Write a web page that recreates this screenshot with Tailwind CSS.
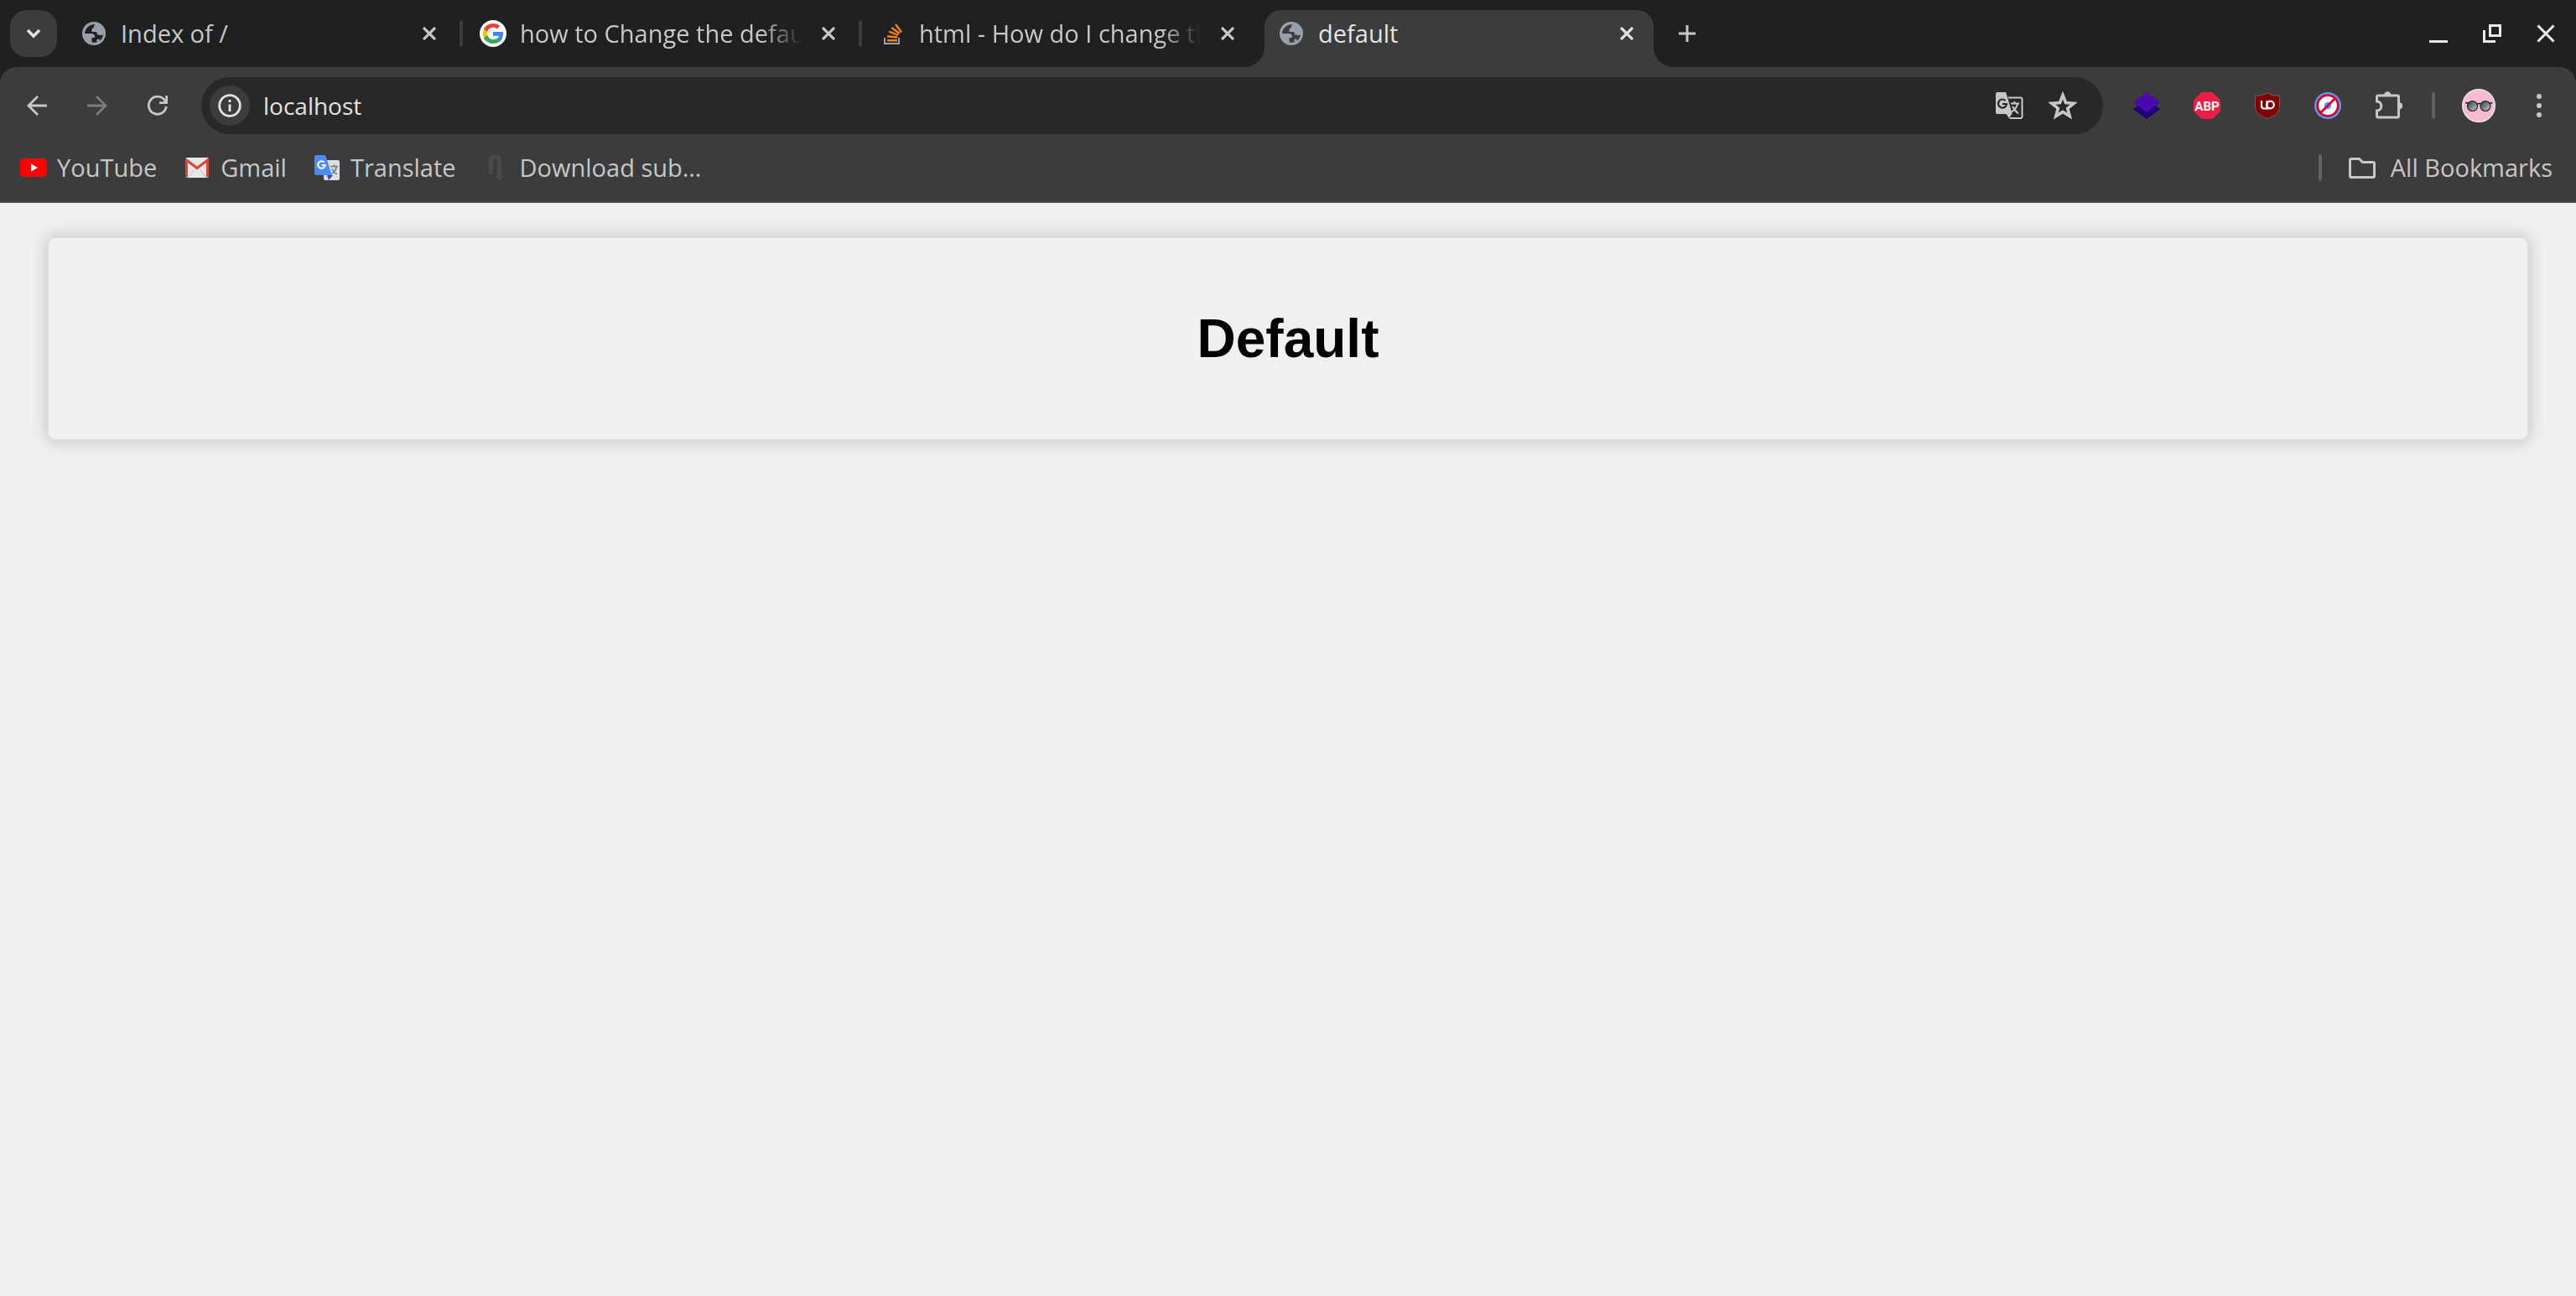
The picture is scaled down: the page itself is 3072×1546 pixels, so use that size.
<!DOCTYPE html>
<html lang="en">
<head>
<meta charset="utf-8">
<title>default</title>
<script src="https://cdn.jsdelivr.net/npm/@tailwindcss/browser@4"></script>
</head>
<body class="flex min-h-screen flex-col bg-[#f0f0f0] font-['Open_Sans',sans-serif] text-[29px] leading-[38px] text-[#c7c7c7]">
<svg class="hidden" aria-hidden="true">
  <symbol id="globe" viewBox="0 0 28 28">
    <circle cx="14" cy="14" r="14" fill="#9aa0a9"/>
    <path fill="var(--land)" d="M16 3C12 3 9 4 7 6 4.500 8 3 11 3 14h8c2.500 0 4 1 4 4v1h-3.500v5.300c2 .8 5 .7 7-.3-.8-.2-1.300-.8-1.300-1.500 0-1.200.8-2 2-2h1c.8-1.500.6-3-1-3.700-1-.4-1.300-1-1.300-2C17.900 12.500 17 12 15 12h-3.500V9.500C11.500 8 12.500 7 14 7V5.500C14 4.300 15 3.300 16 3z"/>
    <path fill="var(--land)" d="M19 14.500c.6 1.400 2 2 3.600 1.600l2.400-.6c-.4 3-2 5.500-4.200 7.200l-.8-3.200c-.3-1-1.500-1.500-2.500-1.500z"/>
  </symbol>
  <symbol id="cross" viewBox="0 0 16 16"><path d="M1 1l14 14M15 1L1 15" stroke="currentColor" stroke-width="3.200" fill="none"/></symbol>
</svg>

<header>
  <div class="flex h-20 items-center bg-[#1f2020]">
    <button aria-label="Search tabs" class="mr-2 ml-3 flex size-14 shrink-0 items-center justify-center rounded-[20px] bg-[#3c3c3c]">
      <svg class="h-3 w-4" viewBox="0 0 16 12"><path d="M1 2l7 7 7-7" stroke="#e3e3e3" stroke-width="3.400" fill="none"/></svg>
    </button>

    <div class="flex w-[476px] items-center pl-5">
      <button class="flex min-w-0 flex-1 items-center gap-4 text-left">
        <svg class="size-8 shrink-0 p-0.5 [--land:#1f2020]"><use href="#globe"/></svg>
        <span class="flex-1 overflow-hidden whitespace-nowrap">Index of /</span>
      </button>
      <button aria-label="Close tab" class="mx-4 flex size-8 items-center justify-center"><svg class="size-4"><use href="#cross"/></svg></button>
      <span class="ml-1 h-8 w-1 rounded-full bg-[#3c3c3c]"></span>
    </div>

    <div class="flex w-[476px] items-center pl-5">
      <button class="flex min-w-0 flex-1 items-center gap-4 text-left">
        <svg class="size-8 shrink-0" viewBox="0 0 32 32"><circle cx="16" cy="16" r="16" fill="#fff"/>
          <g transform="translate(4 4)">
          <path fill="#4285f4" d="M24 12.300c0-.9-.1-1.600-.2-2.300H12v4.700h6.800c-.3 1.600-1.200 2.900-2.500 3.800v3.100h4C22.600 19.400 24 16.200 24 12.300z"/>
          <path fill="#34a853" d="M12 24c3.300 0 6.100-1.100 8.200-3l-4-3c-1.100.7-2.500 1.200-4.200 1.200-3.200 0-5.900-2.100-6.900-5.100H1v3.200C3 21.300 7.200 24 12 24z"/>
          <path fill="#fbbc05" d="M5.100 14.200c-.5-1.500-.5-3.100 0-4.600V6.500H1c-1.500 3.200-1.500 7.400 0 10.900z"/>
          <path fill="#ea4335" d="M12 4.700c1.800 0 3.400.6 4.700 1.800l3.500-3.400C18.100 1.100 15.300 0 12 0 7.200 0 3 2.600 1 6.500l4.100 3.200C6.100 6.800 8.800 4.700 12 4.700z"/></g>
        </svg>
        <span class="flex-1 overflow-hidden whitespace-nowrap [mask-image:linear-gradient(to_right,black_calc(100%-48px),transparent)]">how to Change the default</span>
      </button>
      <button aria-label="Close tab" class="mx-4 flex size-8 items-center justify-center"><svg class="size-4"><use href="#cross"/></svg></button>
      <span class="ml-1 h-8 w-1 rounded-full bg-[#3c3c3c]"></span>
    </div>

    <div class="flex w-[476px] items-center pl-5">
      <button class="flex min-w-0 flex-1 items-center gap-4 text-left">
        <svg class="size-8 shrink-0" viewBox="0 0 32 32" fill="none">
          <path d="M7 21v7h17v-7" stroke="#9aa0a6" stroke-width="2"/>
          <path d="M10 24.200h12M10.200 19.200l12 1.300M12.200 13.700l11 4.300M15.200 9l9.500 7M20 5l7 9.500" stroke="#f48024" stroke-width="2.400"/>
        </svg>
        <span class="flex-1 overflow-hidden whitespace-nowrap [mask-image:linear-gradient(to_right,black_calc(100%-48px),transparent)]">html - How do I change the</span>
      </button>
      <button aria-label="Close tab" class="mx-4 flex size-8 items-center justify-center"><svg class="size-4"><use href="#cross"/></svg></button>
      <span class="ml-1 h-8 w-1"></span>
    </div>

    <div class="relative mr-2 ml-1 flex h-[68px] w-[464px] items-center self-end rounded-t-[20px] bg-[#3c3c3c] pb-3 pl-4 text-[#e3e3e3]">
      <svg class="absolute bottom-0 -left-6 size-6" viewBox="0 0 24 24"><path d="M0 24H24V0A24 24 0 0 1 0 24z" fill="#3c3c3c"/></svg>
      <svg class="absolute -right-6 bottom-0 size-6" viewBox="0 0 24 24"><path d="M24 24H0V0A24 24 0 0 0 24 24z" fill="#3c3c3c"/></svg>
      <button class="flex min-w-0 flex-1 items-center gap-4 text-left">
        <svg class="size-8 shrink-0 p-0.5 [--land:#3c3c3c]"><use href="#globe"/></svg>
        <span class="flex-1 overflow-hidden whitespace-nowrap">default</span>
      </button>
      <button aria-label="Close tab" class="mx-4 flex size-8 items-center justify-center"><svg class="size-4"><use href="#cross"/></svg></button>
    </div>

    <button aria-label="New tab" class="flex size-16 items-center justify-center">
      <svg class="size-5" viewBox="0 0 20 20"><path d="M10 0v20M0 10h20" stroke="#c7c7c7" stroke-width="3"/></svg>
    </button>

    <div class="ml-auto flex pr-1 text-[#e9e9ed]">
      <button aria-label="Minimize" class="flex size-16 items-center justify-center"><svg class="size-[22px]" viewBox="0 0 22 22"><path d="M0 20.500h22" stroke="currentColor" stroke-width="3"/></svg></button>
      <button aria-label="Restore" class="flex size-16 items-center justify-center"><svg class="size-[22px]" viewBox="0 0 22 22"><path d="M8.500 1.500h12v12h-12zM1.500 7v13.500H15" fill="none" stroke="currentColor" stroke-width="3"/></svg></button>
      <button aria-label="Close" class="flex size-16 items-center justify-center"><svg class="size-[22px]" viewBox="0 0 22 22"><path d="M1.500 1.500l19 19M20.500 1.500l-19 19" fill="none" stroke="currentColor" stroke-width="3"/></svg></button>
    </div>
  </div>

  <div class="bg-[#1f2020]">
    <div class="rounded-t-[20px] border-b-2 border-[#484848] bg-[#3c3c3c]">
      <div class="flex items-center pt-3 pr-4 pl-4">
        <nav class="flex gap-4 pr-6">
          <button aria-label="Back" class="flex size-14 items-center justify-center"><svg class="size-6" viewBox="0 0 24 24" fill="none" stroke="#c7c7c7" stroke-width="2.800"><path d="M24 12H2M13 1L2 12l11 11"/></svg></button>
          <button aria-label="Forward" class="flex size-14 items-center justify-center"><svg class="size-6" viewBox="0 0 24 24" fill="none" stroke="#7b7b7b" stroke-width="2.800"><path d="M0 12h22M11 1l11 11-11 11"/></svg></button>
          <button aria-label="Reload" class="flex size-14 items-center justify-center"><svg class="size-6" viewBox="0 0 24 24" fill="none" stroke="#c7c7c7" stroke-width="2.800"><path d="M22.300 13A10.500 10.500 0 1 1 20 5l2 3.500M22.600 0v8.600H14"/></svg></button>
        </nav>
        <div class="flex h-[68px] flex-1 items-center rounded-full bg-[#282828] pr-[30px] pl-[10px]">
          <button aria-label="View site information" class="flex size-12 items-center justify-center rounded-full bg-[#3c3c3c]">
            <svg class="size-7" viewBox="0 0 28 28" fill="none" stroke="#e3e3e3" stroke-width="2.800"><circle cx="14" cy="14" r="12.300"/><path d="M14 12.500V21M14 7v3"/></svg>
          </button>
          <input aria-label="Address" value="localhost" class="ml-4 h-12 min-w-0 flex-1 bg-transparent text-[28px] text-[#e3e3e3] outline-none">
          <button aria-label="Translate this page" class="mr-7 flex size-9 items-center justify-center">
            <svg class="size-[34px]" viewBox="0 0 34 34">
              <path d="M16 7.500h14.500a2 2 0 0 1 2 2v20.500a2 2 0 0 1-2 2H17.500" fill="none" stroke="#c7c7c7" stroke-width="2"/>
              <path d="M3 1h10l2 6 5.500 19.500L17 32l-3.500-5H3a2 2 0 0 1-2-2V3a2 2 0 0 1 2-2z" fill="#c7c7c7"/>
              <path d="M12.600 11A5 5 0 1 0 14 15H9" fill="none" stroke="#282828" stroke-width="2.200"/>
              <path d="M19 14.500H29M23.300 12v2.500M27 15c-1 4.500-4 7.500-7 9.500M21 18c1.500 3.500 4 6 7 8.500" fill="none" stroke="#c7c7c7" stroke-width="2"/>
            </svg>
          </button>
          <button aria-label="Bookmark this tab" class="flex size-9 items-center justify-center">
            <svg class="size-[34px]" viewBox="0 0 34 34"><path d="M17 4.500l3.500 9 9.700.7-7.500 6.100 2.500 9.300L17 24.400l-8.200 5.200 2.500-9.300-7.500-6.100 9.700-.7z" fill="none" stroke="#c7c7c7" stroke-width="3.600"/></svg>
          </button>
        </div>
        <div class="flex items-center gap-4 pl-6">
          <button aria-label="Layers extension" class="flex size-14 items-center justify-center"><svg class="size-8" viewBox="0 0 32 32"><path d="M16 8l16 12-16 12L0 20z" fill="#22007a"/><path d="M16 0l16 12-16 12L0 12z" fill="#4a08ae"/></svg></button>
          <button aria-label="Adblock Plus" class="flex size-14 items-center justify-center"><svg class="size-8" viewBox="0 0 32 32"><path d="M9.500 0h13L32 9.500v13L22.500 32h-13L0 22.500v-13z" fill="#ed1e45"/><text x="16" y="21.500" text-anchor="middle" font-family="Roboto" font-weight="700" font-size="15" fill="#fff">ABP</text></svg></button>
          <button aria-label="uBlock Origin" class="flex size-14 items-center justify-center"><svg class="size-8" viewBox="0 0 32 32"><path d="M16 .7c4 2.600 8 3.300 14.500 3.500v14C30.500 24 24 29 16 31.500 8 29 1.500 24 1.500 18.200v-14C8 4 12 3.300 16 .7z" fill="#800000" stroke="#8a6a6a" stroke-width=".8"/><path d="M9 10v6.500a3 3 0 0 0 3 3h3.500V10M15.500 19.500h2" fill="none" stroke="#fff" stroke-width="2.200"/><circle cx="19.500" cy="15" r="4.300" fill="none" stroke="#fff" stroke-width="2.200"/></svg></button>
          <button aria-label="Popup blocker" class="flex size-14 items-center justify-center"><svg class="size-8" viewBox="0 0 32 32"><circle cx="16" cy="16" r="16" fill="#599cf5"/><circle cx="16" cy="16" r="12.300" fill="#fff" stroke="#d8002f" stroke-width="2.800"/><circle cx="16" cy="16" r="4.300" fill="#599cf5"/><path d="M7 25L25 7" stroke="#d8002f" stroke-width="2.800"/></svg></button>
          <button aria-label="Extensions" class="flex size-14 items-center justify-center"><svg class="size-9" viewBox="0 0 36 36"><path d="M6 6h23a1.500 1.500 0 0 1 1.500 1.500v23A1.500 1.500 0 0 1 29 32H6a1.500 1.500 0 0 1-1.500-1.500V24c7 0 7-11 0-11V7.500A1.500 1.500 0 0 1 6 6z" fill="none" stroke="#c7c7c7" stroke-width="3"/><path d="M13 5.500a4.200 4.200 0 0 1 8.400 0zM31 14a4.200 4.200 0 0 1 0 8.400z" fill="#c7c7c7"/></svg></button>
        </div>
        <span class="mr-8 ml-6 h-8 w-1 rounded-full bg-[#606060]"></span>
        <button aria-label="Profile" class="size-10">
          <svg class="size-10" viewBox="0 0 40 40">
            <defs><linearGradient id="lens" x1="0" x2="1" y1="0" y2="1"><stop offset="0" stop-color="#2e3a3d"/><stop offset=".5" stop-color="#6f8588"/><stop offset="1" stop-color="#f2c8cc"/></linearGradient></defs>
            <circle cx="20" cy="20" r="19.300" fill="#f8bbd0" stroke="#e9e9e9" stroke-width="1.400"/>
            <g fill="url(#lens)" stroke="#222" stroke-width="1.200"><circle cx="12.500" cy="20.500" r="6"/><circle cx="28" cy="20.500" r="6"/></g>
            <path d="M18 18.500c1.500-1.300 3-1.300 4.500 0M4 16.500l4 .8M36.500 16.500l-4 .8" fill="none" stroke="#222" stroke-width="1.600"/>
          </svg>
        </button>
        <button aria-label="Menu" class="ml-6 flex size-14 items-center justify-center"><svg class="h-7 w-2" viewBox="0 0 8 28" fill="#c7c7c7"><circle cx="4" cy="3" r="3"/><circle cx="4" cy="14" r="3"/><circle cx="4" cy="25" r="3"/></svg></button>
      </div>

      <nav class="flex h-20 items-center pr-7 pl-6 whitespace-nowrap">
        <a href="#" class="flex items-center gap-3">
          <svg class="size-8" viewBox="0 0 32 32"><rect y="5" width="32" height="22" rx="5" fill="#f00"/><path d="M13 11.200v9.600l8-4.800z" fill="#fff"/></svg>YouTube</a>
        <a href="#" class="ml-8 flex items-center gap-3">
          <svg class="size-8" viewBox="0 0 32 32"><path d="M3 4h26v24H3z" fill="#e8e8e8"/><path d="M6 27l7-9M26 27l-7-9" stroke="#d0d0d0" stroke-width="1.500"/><path d="M3.500 27.500V7L16 16.500 28.500 7v20.500" fill="none" stroke="#db4437" stroke-width="3"/></svg>Gmail</a>
        <a href="#" class="ml-8 flex items-center gap-3">
          <svg class="size-8" viewBox="0 0 32 32"><rect x="12" y="7" width="19" height="24" rx="2" fill="#dedede"/><path d="M16 25h7l-5 6z" fill="#3b48b8"/><path d="M3 1h11l8 24H3a2 2 0 0 1-2-2V3a2 2 0 0 1 2-2z" fill="#4c8bf5"/><path d="M12.600 9.500A4.300 4.300 0 1 0 13.800 13H9.600" fill="none" stroke="#fff" stroke-width="2"/><path d="M20 14.500h9M24.500 12.500v2M27.500 15c-1 4-3 6-5.500 8M22 17.500c1.500 3 3.500 5 6 6.500" fill="none" stroke="#607d8b" stroke-width="1.500"/></svg>Translate</a>
        <a href="#" class="ml-8 flex items-center gap-3">
          <svg class="size-8" viewBox="0 0 32 32"><path d="M9.500 23V6.500a3.500 3.500 0 0 1 3.500-3.500h3a3.500 3.500 0 0 1 3.500 3.500V27" fill="none" stroke="#4a4949" stroke-width="5"/><path d="M15 26h9l-4.500 6z" fill="#4a4949"/></svg>Download sub…</a>
        <span class="mr-8 ml-auto h-8 w-1 rounded-full bg-[#606060]"></span>
        <a href="#" class="flex items-center gap-[18px]">
          <svg class="size-8" viewBox="0 0 32 32"><path d="M3 5.500h9.500l4 4H29a1.500 1.500 0 0 1 1.500 1.500v15a1.500 1.500 0 0 1-1.500 1.500H3A1.500 1.500 0 0 1 1.500 26V7A1.500 1.500 0 0 1 3 5.500z" fill="none" stroke="#c7c7c7" stroke-width="3"/></svg>All Bookmarks</a>
      </nav>
    </div>
  </div>
</header>

<main class="px-14 py-10">
  <section class="flex h-[244px] items-center justify-center rounded-[10px] border-2 border-[#ddd] bg-[#f0f0f0] shadow-[0_0_20px_rgba(0,0,0,0.2)]">
    <h1 class="font-['Liberation_Sans',sans-serif] text-[64px] leading-[74px] font-bold text-black">Default</h1>
  </section>
</main>
</body>
</html>
